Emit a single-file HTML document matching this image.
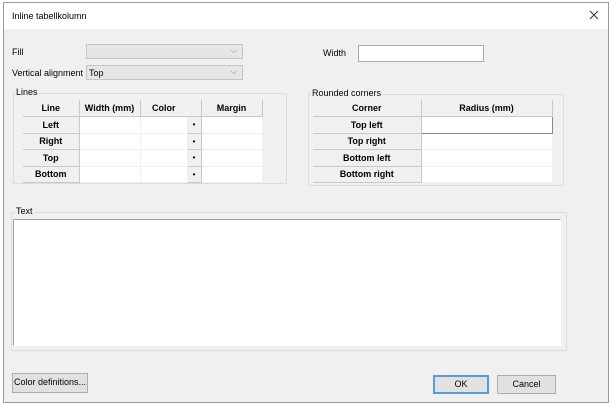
<!DOCTYPE html>
<html><head><style>
*{box-sizing:border-box;margin:0;padding:0}
body{width:612px;height:404px;background:#fff;font-family:"Liberation Sans",sans-serif;font-size:9px;color:#000;position:relative;overflow:hidden}
.win{position:absolute;left:3px;top:2px;width:606px;height:401px;border:1px solid #9a9a9a;background:#f0f0f0}
.title{position:absolute;left:0;top:0;width:100%;height:26px;background:#fff}
.a{position:absolute}
.combo{position:absolute;background:#e6e6e6;border:1px solid #c4c4c4}
.combo .v{position:absolute;right:5px;top:1px;color:#777;font-size:8px}
.inp{position:absolute;background:#fff;border:1px solid #a9a9a9}
.grp{position:absolute;border:1px solid #dcdcdc}
.lbl{position:absolute;background:#f0f0f0;padding:0 1px}
table{position:absolute;border-collapse:collapse}
td{height:16.5px;padding:0;text-align:center;font-weight:bold}
td.h{background:#f0f0f0;border-right:1px solid #c8c8c8;border-bottom:1px solid #c8c8c8}
td.w{background:#fff;border-bottom:1px solid #f0f0f0;border-right:1px solid #f0f0f0}
td.b{background:#f0f0f0;border:1px solid #c8c8c8;font-weight:normal;font-size:8px}
.btn{position:absolute;background:#e1e1e1;border:1px solid #adadad;text-align:center;line-height:17px}
</style></head><body>
<div class="win">
<div class="title"></div>
</div>
<div class="a" style="left:12px;top:11px;font-size:9px">Inline tabellkolumn</div>
<svg class="a" style="left:589px;top:10px" width="10" height="10"><path d="M1 1L9 9M9 1L1 9" stroke="#333" stroke-width="1"/></svg>

<div class="a" style="left:12px;top:47px">Fill</div>
<div class="combo" style="left:86px;top:44px;width:157px;height:15px"><span class="v">⌵</span></div>
<div class="a" style="left:12px;top:68px">Vertical alignment</div>
<div class="combo" style="left:86px;top:65px;width:157px;height:15px"><span style="position:absolute;left:2px;top:2px">Top</span><span class="v">⌵</span></div>

<div class="grp" style="left:13px;top:93px;width:274px;height:91px"></div>
<div class="lbl" style="left:15px;top:87px">Lines</div>
<table style="left:23px;top:100px">
<tr><td class="h" style="width:56px">Line</td><td class="h" style="width:61px">Width (mm)</td><td class="h" style="width:47px;border-right:none">Color</td><td class="h" style="width:14px"></td><td class="h" style="width:61px">Margin</td></tr>
<tr><td class="h">Left</td><td class="w"></td><td class="w"></td><td class="b">•</td><td class="w"></td></tr>
<tr><td class="h">Right</td><td class="w"></td><td class="w"></td><td class="b">•</td><td class="w"></td></tr>
<tr><td class="h">Top</td><td class="w"></td><td class="w"></td><td class="b">•</td><td class="w"></td></tr>
<tr><td class="h">Bottom</td><td class="w"></td><td class="w"></td><td class="b">•</td><td class="w"></td></tr>
</table>

<div class="a" style="left:323px;top:48px">Width</div>
<div class="inp" style="left:358px;top:45px;width:126px;height:17px"></div>

<div class="grp" style="left:308px;top:94px;width:256px;height:92px"></div>
<div class="lbl" style="left:311px;top:88px">Rounded corners</div>
<table style="left:313px;top:100px">
<tr><td class="h" style="width:108px">Corner</td><td class="h" style="width:131px">Radius (mm)</td></tr>
<tr><td class="h">Top left</td><td class="w" style="border:1px solid #888"></td></tr>
<tr><td class="h">Top right</td><td class="w"></td></tr>
<tr><td class="h">Bottom left</td><td class="w"></td></tr>
<tr><td class="h">Bottom right</td><td class="w"></td></tr>
</table>

<div class="grp" style="left:11px;top:212px;width:556px;height:139px"></div>
<div class="lbl" style="left:15px;top:206px">Text</div>
<div class="inp" style="left:13px;top:219px;width:548px;height:127px;border-color:#a0a0a0 #fff #fff #a0a0a0"></div>

<div class="btn" style="left:12px;top:373px;width:76px;height:20px">Color definitions...</div>
<div class="btn" style="left:433px;top:375px;width:56px;height:19px;border:2px solid #5b9bd5;line-height:15px">OK</div>
<div class="btn" style="left:497px;top:375px;width:59px;height:19px">Cancel</div>
</body></html>
